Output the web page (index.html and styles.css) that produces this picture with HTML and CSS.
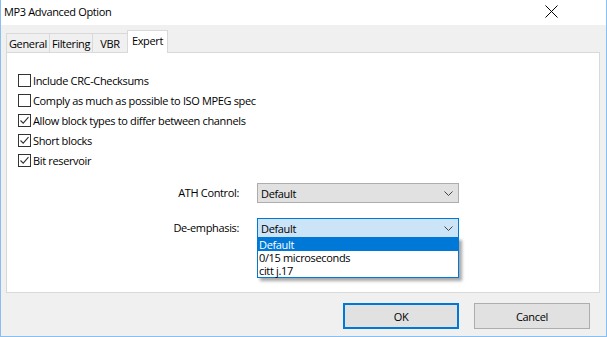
FILE: index.html
```html
<!DOCTYPE html>
<html lang="en">

<head>
    <meta charset="UTF-8">
    <meta name="viewport" content="width=device-width, initial-scale=1.0">
    <title>MP3 Advanced Option</title>
    <link rel="stylesheet" href="styles.css">
</head>

<body>
    <div class="window">
        <!-- Barra de titulo -->
        <div class="titlebar">
            <span class="title">MP3 Advanced Option</span>
            <svg class="close" width="13" height="13" viewBox="0 0 13 13">
                <path d="M0.5 0.5 L12.5 12.5 M12.5 0.5 L0.5 12.5" stroke="#000" stroke-width="1" fill="none"/>
            </svg>
        </div>

        <!-- Abas -->
        <div class="tabs">
            <div class="tab tab-general">General</div>
            <div class="tab tab-filtering">Filtering</div>
            <div class="tab tab-vbr">VBR</div>
            <div class="tab tab-expert active">Expert</div>
        </div>

        <div class="panel">
            <div class="options">
                <label class="option"><span class="box"></span>Include CRC-Checksums</label>
                <label class="option"><span class="box"></span>Comply as much as possible to ISO MPEG spec</label>
                <label class="option"><span class="box checked"><svg width="11" height="11" viewBox="0 0 11 11"><path d="M1.5 5.5 L4.2 8.2 L9.5 2.2" stroke="#333" stroke-width="1.1" fill="none"/></svg></span>Allow block types to differ between channels</label>
                <label class="option"><span class="box checked"><svg width="11" height="11" viewBox="0 0 11 11"><path d="M1.5 5.5 L4.2 8.2 L9.5 2.2" stroke="#333" stroke-width="1.1" fill="none"/></svg></span>Short blocks</label>
                <label class="option"><span class="box checked"><svg width="11" height="11" viewBox="0 0 11 11"><path d="M1.5 5.5 L4.2 8.2 L9.5 2.2" stroke="#333" stroke-width="1.1" fill="none"/></svg></span>Bit reservoir</label>
            </div>

            <div class="form">
                <span class="label">ATH Control:</span>
                <div class="select">
                    <span>Default</span>
                    <svg class="chevron" width="9" height="5" viewBox="0 0 9 5"><path d="M0.5 0.5 L4.5 4.5 L8.5 0.5" stroke="#444" fill="none"/></svg>
                </div>

                <span class="label">De-emphasis:</span>
                <div class="select open">
                    <span>Default</span>
                    <svg class="chevron" width="9" height="5" viewBox="0 0 9 5"><path d="M0.5 0.5 L4.5 4.5 L8.5 0.5" stroke="#444" fill="none"/></svg>
                    <!-- Lista aberta -->
                    <ul class="dropdown">
                        <li class="selected">Default</li>
                        <li>0/15 microseconds</li>
                        <li>citt j.17</li>
                    </ul>
                </div>
            </div>
        </div>

        <!-- Botoes -->
        <div class="footer">
            <button class="btn btn-ok">OK</button>
            <button class="btn">Cancel</button>
        </div>
    </div>
</body>

</html>
```

FILE: styles.css
```css
/* Estilo geral */
body {
    margin: 0;
    padding: 0;
    font-family: "Open Sans", "Noto Sans", sans-serif;
    font-size: 11px;
    letter-spacing: -0.35px;
    color: #000;
    background-color: #f0f0f0;
}

.window {
    width: 607px;
    height: 337px;
    box-sizing: border-box;
    border: 1px solid #86bff0;
    border-top: none;
    background-color: #f0f0f0;
    display: flex;
    flex-direction: column;
}

/* Barra de titulo */
.titlebar {
    height: 25px;
    background-color: #ffffff;
    display: flex;
    align-items: center;
    padding-left: 3px;
}

.title {
    font-size: 11px;
    flex: 1;
    margin-top: -2px;
}

.close {
    margin-right: 48px;
    margin-top: -3px;
}

/* Abas */
.tabs {
    display: flex;
    align-items: flex-end;
    height: 21px;
    margin-top: 6px;
    padding-left: 5px;
    position: relative;
    z-index: 1;
}

.tab {
    box-sizing: border-box;
    height: 19px;
    border: 1px solid #d9d9d9;
    border-bottom: none;
    border-right: none;
    background-color: #f0f0f0;
    text-align: center;
    line-height: 19px;
}

.tab-general { width: 43px; }
.tab-filtering { width: 43px; }
.tab-vbr { width: 35px; }

.tab-expert {
    width: 41px;
    height: 23px;
    margin-bottom: -1px;
    background-color: #ffffff;
    border-right: 1px solid #d9d9d9;
    line-height: 19px;
}

/* Painel */
.panel {
    box-sizing: border-box;
    width: 594px;
    height: 241px;
    margin-left: 5px;
    border: 1px solid #d9d9d9;
    background-color: #ffffff;
    position: relative;
}

.options {
    display: flex;
    flex-direction: column;
    padding-top: 17px;
    padding-left: 11px;
}

.option {
    height: 20px;
    display: flex;
    align-items: center;
    gap: 2px;
}

.box {
    box-sizing: border-box;
    width: 13px;
    height: 13px;
    border: 1px solid #333;
    background-color: #ffffff;
    display: flex;
    align-items: center;
    justify-content: center;
}

/* Formulario */
.form {
    display: grid;
    grid-template-columns: 233px 202px;
    column-gap: 18px;
    row-gap: 15px;
    margin-top: 13px;
    margin-left: -1px;
}

.label {
    text-align: right;
    line-height: 20px;
}

.select {
    box-sizing: border-box;
    height: 20px;
    border: 1px solid #adadad;
    background-color: #e1e1e1;
    display: flex;
    align-items: center;
    justify-content: space-between;
    padding: 0 5px 0 3px;
    position: relative;
}

.select.open {
    border-color: #0078d7;
    background-color: #cce4f7;
}

.dropdown {
    position: absolute;
    left: -1px;
    top: 18px;
    width: 202px;
    box-sizing: border-box;
    margin: 0;
    padding: 0;
    list-style: none;
    background-color: #ffffff;
    border: 1px solid #0078d7;
    box-shadow: 3px 3px 3px rgba(0, 0, 0, 0.35);
}

.dropdown li {
    height: 13px;
    line-height: 13px;
    padding-left: 1px;
}

.dropdown li.selected {
    background-color: #0078d7;
    color: #ffffff;
}

/* Botoes */
.footer {
    display: flex;
    justify-content: flex-end;
    gap: 15px;
    padding-top: 10px;
    padding-right: 16px;
}

.btn {
    box-sizing: border-box;
    width: 116px;
    height: 26px;
    border: 1px solid #adadad;
    background-color: #e1e1e1;
    font-family: "Open Sans", "Noto Sans", sans-serif;
    font-size: 11px;
    letter-spacing: -0.35px;
    color: #000;
    padding: 0;
}

.btn-ok {
    border: 2px solid #0078d7;
}
```
